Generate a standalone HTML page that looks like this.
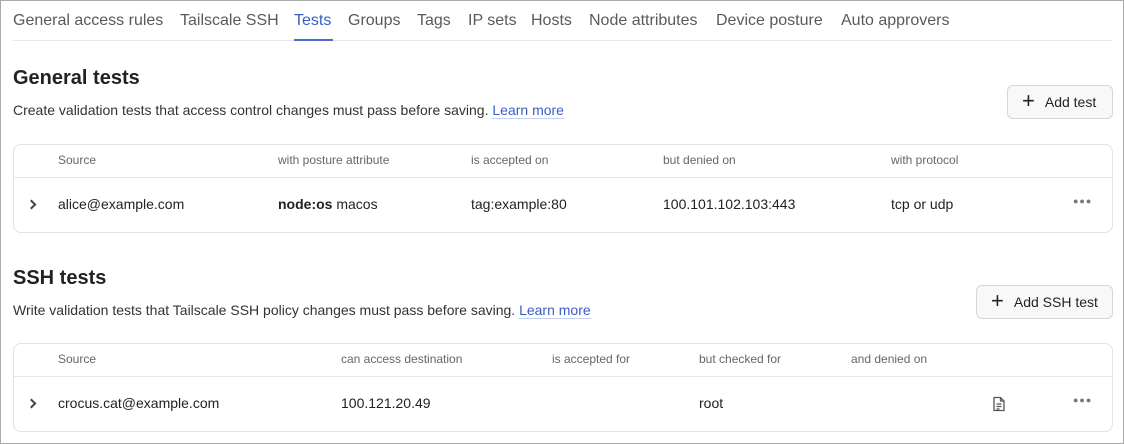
<!DOCTYPE html><html><head><style>
*{box-sizing:border-box;margin:0;padding:0}
body{width:1124px;height:444px;background:#fff;font-family:"Liberation Sans",sans-serif;color:#222;overflow:hidden}
.frame{position:absolute;left:0;top:0;width:1124px;height:444px;border:1px solid #a9a9a9}
.tabs{position:absolute;left:13px;top:0;width:1099px;height:41px;border-bottom:1px solid #e8e8e8}
.tab{position:absolute;top:12px;font-size:16px;color:#5a5a5a;white-space:nowrap}
.tab.on{color:#3b5cc4}
.ul{position:absolute;left:294px;top:39px;width:39px;height:2px;background:#4a6bd0}
h2{position:absolute;left:13px;font-size:20px;font-weight:600;color:#222}
.d{position:absolute;left:13px;font-size:14px;color:#333}
.d a{color:#3b5cc4;text-decoration:none;border-bottom:1px solid #c5cfee}
.btn{position:absolute;height:34px;border:1px solid #d6d6d6;border-radius:6px;background:#f8f8f8;font-size:14px;color:#222;display:flex;align-items:center;padding-left:14px}
.btn span.p{font-size:22px;font-weight:300;margin-right:10px;line-height:1;margin-top:-2px}
.tbl{position:absolute;left:13px;width:1100px;height:89px;border:1px solid #e2e2e2;border-radius:8px}
.hr{position:absolute;left:0;top:32px;width:100%;border-top:1px solid #e8e8e8}
.h{position:absolute;top:8px;font-size:12px;color:#666;white-space:nowrap}
.c{position:absolute;top:51px;font-size:14px;color:#222;white-space:nowrap}
.chev{position:absolute;left:14px;top:56px;width:7px;height:7px;border-right:2px solid #444;border-top:2px solid #444;transform:rotate(45deg)}
.dots{position:absolute;left:1059px;top:51px;font-size:9px;color:#777;letter-spacing:1px}
</style></head><body>
<div class="frame"></div>
<div class="tabs">
<span class="tab" style="left:0">General access rules</span>
<span class="tab" style="left:167px">Tailscale SSH</span>
<span class="tab on" style="left:281px">Tests</span>
<span class="tab" style="left:335px">Groups</span>
<span class="tab" style="left:404px">Tags</span>
<span class="tab" style="left:455px">IP sets</span>
<span class="tab" style="left:518px">Hosts</span>
<span class="tab" style="left:576px">Node attributes</span>
<span class="tab" style="left:703px">Device posture</span>
<span class="tab" style="left:828px">Auto approvers</span>
</div>
<div class="ul"></div>
<h2 style="top:67px">General tests</h2>
<div class="d" style="top:102px">Create validation tests that access control changes must pass before saving. <a>Learn more</a></div>
<div class="btn" style="left:1007px;top:85px;width:106px"><span class="p">+</span>Add test</div>
<div class="tbl" style="top:144px">
<span class="h" style="left:44px">Source</span><span class="h" style="left:264px">with posture attribute</span><span class="h" style="left:457px">is accepted on</span><span class="h" style="left:649px">but denied on</span><span class="h" style="left:877px">with protocol</span>
<div class="hr"></div><div class="chev"></div>
<span class="c" style="left:44px">alice@example.com</span><span class="c" style="left:264px"><b style="font-weight:600">node:os</b> macos</span><span class="c" style="left:457px">tag:example:80</span><span class="c" style="left:649px">100.101.102.103:443</span><span class="c" style="left:877px">tcp or udp</span>
<span class="dots">●●●</span>
</div>
<h2 style="top:267px">SSH tests</h2>
<div class="d" style="top:302px">Write validation tests that Tailscale SSH policy changes must pass before saving. <a>Learn more</a></div>
<div class="btn" style="left:976px;top:285px;width:137px"><span class="p">+</span>Add SSH test</div>
<div class="tbl" style="top:343px">
<span class="h" style="left:44px">Source</span><span class="h" style="left:327px">can access destination</span><span class="h" style="left:538px">is accepted for</span><span class="h" style="left:685px">but checked for</span><span class="h" style="left:837px">and denied on</span>
<div class="hr"></div><div class="chev"></div>
<span class="c" style="left:44px">crocus.cat@example.com</span><span class="c" style="left:327px">100.121.20.49</span><span class="c" style="left:685px">root</span>
<svg style="position:absolute;left:978px;top:52px" width="14" height="16" viewBox="0 0 14 16" fill="none" stroke="#555" stroke-width="1.3"><path d="M2 1.5h6.5l3.5 3.5v9.5H2z M8.5 1.5V5H12 M4.5 8h5 M4.5 10.5h5 M4.5 13h3"/></svg>
<span class="dots">●●●</span>
</div>
</body></html>
